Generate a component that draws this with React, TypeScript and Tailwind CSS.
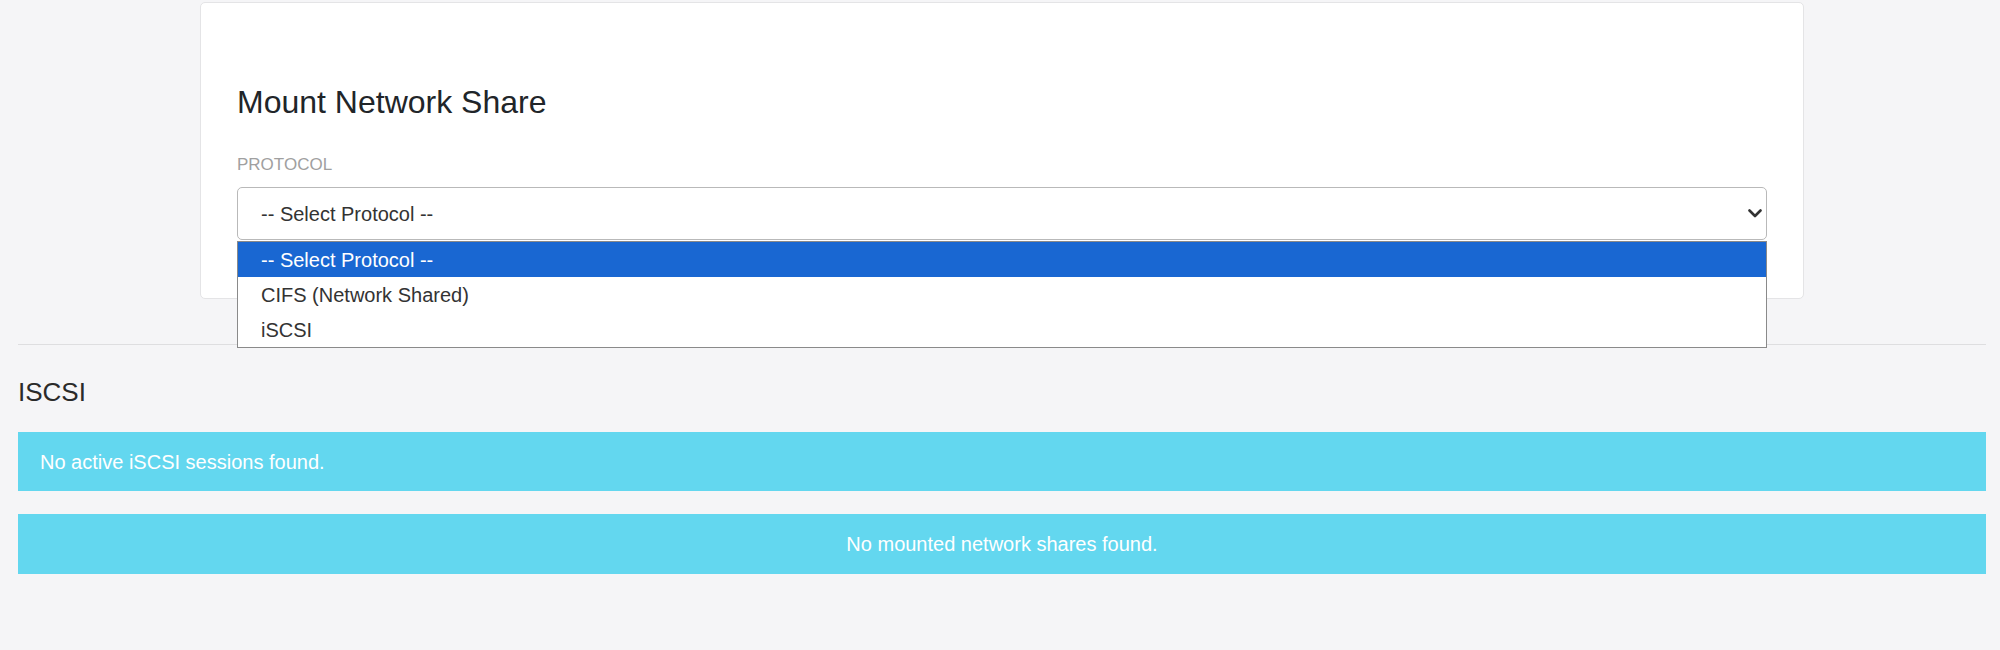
import React from "react";

export default function App() {
  return (
    <div className="min-h-[650px] bg-[#f5f5f7] pl-[18px] pr-[14px] pt-[2px] font-['Liberation_Sans',Arial,sans-serif]">
      <div className="mx-auto w-[1604px] rounded-[5px] border border-[#e4e4e6] bg-white px-[36px] pt-[80px] pb-[58px]">
        <h2 className="text-[32px] leading-[38px] font-normal text-[#212529]">Mount Network Share</h2>
        <div className="mt-[31px] text-[17px] leading-[26px] uppercase text-[#a0a0a0]">Protocol</div>
        <div className="relative mt-[9px]">
          <div className="flex h-[53px] items-center rounded-[5px] border border-[#b9b9b9] bg-white pl-[23px] pr-[4px] text-[20px] text-[#333]">
            <span>-- Select Protocol --</span>
            <svg className="ml-auto" width="14" height="9" viewBox="0 0 14 9" fill="none">
              <path d="M1.5 1.5 L7 7 L12.5 1.5" stroke="#333" strokeWidth="2.6" strokeLinecap="round" strokeLinejoin="round" />
            </svg>
          </div>
          <div className="absolute left-0 right-0 top-[54px] z-10 border border-[#8a8a8a] bg-white text-[20px] text-[#333]">
            <div className="flex h-[35px] items-center bg-[#1967d2] pl-[23px] text-white">-- Select Protocol --</div>
            <div className="flex h-[35px] items-center pl-[23px]">CIFS (Network Shared)</div>
            <div className="flex h-[35px] items-center pl-[23px]">iSCSI</div>
          </div>
        </div>
      </div>
      <div className="mt-[45px] border-t border-[#dedee0]" />
      <h3 className="mt-[32px] text-[26px] leading-[31px] font-normal text-[#2a2a2a]">ISCSI</h3>
      <div className="mt-[24px] flex h-[59px] items-center bg-[#63d7ef] px-[22px] text-[20px] text-white">
        No active iSCSI sessions found.
      </div>
      <div className="mt-[23px] flex h-[60px] items-center justify-center bg-[#63d7ef] px-[22px] text-[20px] text-white">
        No mounted network shares found.
      </div>
    </div>
  );
}
